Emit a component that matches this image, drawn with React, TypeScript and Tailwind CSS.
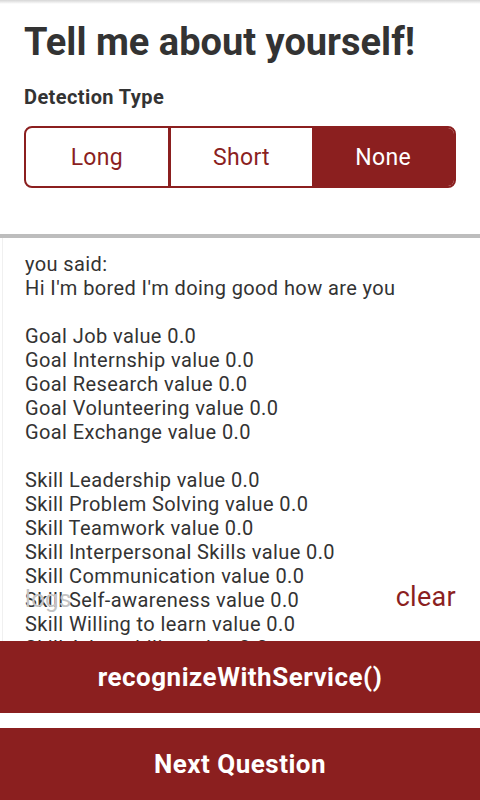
import React from "react";

const lines = [
  "you said:",
  "Hi I'm bored I'm doing good how are you",
  "",
  "Goal Job value 0.0",
  "Goal Internship value 0.0",
  "Goal Research value 0.0",
  "Goal Volunteering value 0.0",
  "Goal Exchange value 0.0",
  "",
  "Skill Leadership value 0.0",
  "Skill Problem Solving value 0.0",
  "Skill Teamwork value 0.0",
  "Skill Interpersonal Skills value 0.0",
  "Skill Communication value 0.0",
  "Skill Self-awareness value 0.0",
  "Skill Willing to learn value 0.0",
  "Skill Adaptability value 0.0",
];

export default function App() {
  return (
    <div
      className="w-[480px] h-[800px] bg-white flex flex-col overflow-hidden relative"
      style={{ fontFamily: "Roboto, 'Noto Sans', sans-serif" }}
    >
      <div className="h-[4px] bg-gradient-to-b from-[#d6d6d6] to-white shrink-0" />
      <div className="px-6 pt-[14px] shrink-0">
        <h1 className="text-[38px] font-bold text-[#333] leading-[48px]">
          Tell me about yourself!
        </h1>
        <div className="mt-[19px] text-[20px] font-bold text-[#333] leading-[24px] tracking-[0.4px]">
          Detection Type
        </div>
        <div className="mt-[17px] h-[62px] flex border-2 border-[#8b1f1f] rounded-[8px] overflow-hidden">
          <div className="flex-1 flex items-center justify-center text-[23px] tracking-[0.3px] text-[#8b1f1f] border-r-[3px] border-[#8b1f1f] pt-[2px]">
            Long
          </div>
          <div className="flex-1 flex items-center justify-center text-[23px] tracking-[0.3px] text-[#8b1f1f] pt-[2px]">
            Short
          </div>
          <div className="flex-1 flex items-center justify-center text-[23px] tracking-[0.3px] text-white bg-[#8b1f1f] pt-[2px]">
            None
          </div>
        </div>
      </div>
      <div className="mt-[46px] h-[4px] bg-[#bdbdbd] shrink-0" />
      <div className="relative flex-1 overflow-hidden border-l border-[#f0f0f0] ml-[2px]">
        <div className="pl-[22px] pt-[14px] text-[20px] leading-[24px] tracking-[0.4px] text-[#333]">
          {lines.map((l, i) => (
            <div key={i} className="h-[24px] whitespace-nowrap">
              {l}
            </div>
          ))}
        </div>
        <div className="absolute left-[22px] top-[349px] text-[24px] tracking-[0.3px] text-[#c4c4c4] leading-[24px]">
          logs
        </div>
        <div className="absolute right-[24px] top-[344px] text-[27px] tracking-[0.3px] text-[#8b1f1f] leading-[30px]">
          clear
        </div>
      </div>
      <div className="h-[72px] bg-[#8b1f1f] flex items-center justify-center text-white text-[26px] tracking-[0.5px] font-bold shrink-0">
        recognizeWithService()
      </div>
      <div className="h-[15px] shrink-0" />
      <div className="h-[72px] bg-[#8b1f1f] flex items-center justify-center text-white text-[26px] tracking-[0.5px] font-bold shrink-0">
        Next Question
      </div>
    </div>
  );
}
